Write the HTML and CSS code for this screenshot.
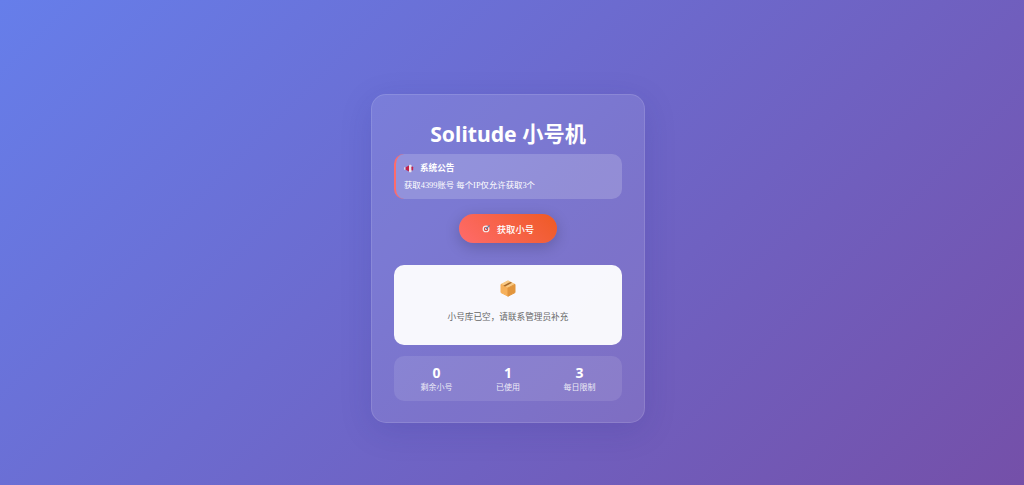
FILE: index.html
```html
<!DOCTYPE html>
<html lang="zh-CN">
<head>
    <meta charset="UTF-8">
    <meta name="viewport" content="width=device-width, initial-scale=1.0">
    <title>Solitude 小号机</title>
    <link rel="stylesheet" href="styles.css">
</head>
<body>
    <div class="card">
        <h1 class="card-title">Solitude 小号机</h1>

        <div class="notice">
            <div class="notice-title">
                <svg class="notice-icon" viewBox="0 0 12 10" aria-hidden="true">
                    <rect x="0" y="3.5" width="2" height="3" fill="#d8d3e6"/>
                    <path d="M2 3.5 6 1.5v7L2 6.500z" fill="#c2214a"/>
                    <rect x="6" y="0.500" width="3" height="9" rx="1" fill="#f0e6ea"/>
                    <rect x="9" y="2.500" width="2" height="5" rx="1" fill="#c2214a"/>
                </svg>
                <span>系统公告</span>
            </div>
            <p class="notice-text">获取4399账号 每个IP仅允许获取3个</p>
        </div>

        <div class="action">
            <button class="btn-get">
                <svg class="btn-icon" viewBox="0 0 10 10" aria-hidden="true">
                    <circle cx="4.500" cy="5.500" r="3.800" fill="#f4f1f1"/>
                    <circle cx="4.500" cy="5.500" r="2.500" fill="#d9473f"/>
                    <circle cx="4.500" cy="5.500" r="1.200" fill="#f4f1f1"/>
                    <path d="M4.500 5.500 8.500 1.500" stroke="#5f7fa8" stroke-width="1.400"/>
                </svg>
                <span>获取小号</span>
            </button>
        </div>

        <div class="empty-box">
            <svg class="empty-icon" viewBox="0 0 16 17" aria-hidden="true">
                <path d="M8 0.800 15 4.400 8 8 1 4.400z" fill="#f9c983" stroke="#f9c983" stroke-width="1" stroke-linejoin="round"/>
                <path d="M1 4.400 8 8V16.200L1 12.600z" fill="#f6b05a" stroke="#f6b05a" stroke-width="1" stroke-linejoin="round"/>
                <path d="M15 4.400 8 8V16.200L15 12.600z" fill="#e2953c" stroke="#e2953c" stroke-width="1" stroke-linejoin="round"/>
                <path d="M3.300 5.700 10.300 1.900 12 2.800 5 6.600z" fill="#a5692c"/>
            </svg>
            <p class="empty-text">小号库已空，请联系管理员补充</p>
        </div>

        <div class="stats">
            <div class="stat-item">
                <div class="stat-num">0</div>
                <div class="stat-label">剩余小号</div>
            </div>
            <div class="stat-item">
                <div class="stat-num">1</div>
                <div class="stat-label">已使用</div>
            </div>
            <div class="stat-item">
                <div class="stat-num">3</div>
                <div class="stat-label">每日限制</div>
            </div>
        </div>
    </div>
</body>
</html>
```

FILE: styles.css
```css
/* Base styles */
* {
    margin: 0;
    padding: 0;
    box-sizing: border-box;
}

body {
    font-family: "Noto Sans", "Noto Sans CJK SC", sans-serif;
    height: 100vh;
    overflow: hidden;
    color: #fff;
    background: linear-gradient(135deg, #667eea 0%, #764ba2 110%);
    display: flex;
    align-items: center;
    justify-content: center;
    padding: 32px 8px 0 0;
}

/* Card */
.card {
    width: 274px;
    height: 329px;
    padding: 23px 22px;
    background: rgba(255, 255, 255, 0.1);
    border: 1px solid rgba(255, 255, 255, 0.12);
    border-radius: 15px;
    box-shadow: 0 8px 32px rgba(31, 38, 135, 0.15);
}

.card-title {
    font-size: 21.2px;
    font-weight: 700;
    line-height: 32px;
    text-align: center;
    margin-bottom: 4px;
}

/* Notice */
.notice {
    height: 45px;
    padding: 7px 8px;
    background: rgba(255, 255, 255, 0.18);
    border-left: 2px solid #ff6b6b;
    border-radius: 10px;
    font-size: 8.6px;
}

.notice-title {
    display: flex;
    align-items: center;
    gap: 6px;
    font-weight: 700;
    line-height: 15px;
    margin-bottom: 2px;
}

.notice-icon {
    width: 10px;
    height: 9px;
}

.notice-text {
    font-size: 8.4px;
    line-height: 15px;
    font-family: "Liberation Serif", "Noto Sans CJK SC", serif;
}

/* Button */
.action {
    display: flex;
    justify-content: center;
    margin: 15px 0 22px;
}

.btn-get {
    width: 98px;
    height: 29px;
    display: flex;
    align-items: center;
    justify-content: center;
    gap: 6px;
    border: none;
    border-radius: 15px;
    color: #fff;
    font-family: inherit;
    font-size: 9.4px;
    font-weight: 500;
    background: linear-gradient(45deg, #ff6b6b, #ee5a24);
    box-shadow: 0 4px 15px rgba(0, 0, 0, 0.2);
}

.btn-icon {
    width: 9px;
    height: 9px;
}

/* Empty state */
.empty-box {
    height: 80px;
    padding-top: 15px;
    background: rgba(255, 255, 255, 0.95);
    border-radius: 10px;
    text-align: center;
}

.empty-icon {
    display: block;
    width: 16px;
    height: 17px;
    margin: 0 auto 13px;
}

.empty-text {
    font-family: "Liberation Serif", "Noto Sans CJK SC", serif;
    font-size: 8.65px;
    line-height: 15px;
    color: #666;
}

/* Stats */
.stats {
    height: 45px;
    margin-top: 11px;
    padding: 8px 0;
    display: grid;
    grid-template-columns: repeat(3, 71.5px);
    justify-content: center;
    background: rgba(255, 255, 255, 0.1);
    border-radius: 10px;
    text-align: center;
}

.stat-num {
    font-size: 14px;
    font-weight: 700;
    line-height: 17px;
}

.stat-label {
    font-size: 8px;
    line-height: 12px;
    opacity: 0.85;
}
```
